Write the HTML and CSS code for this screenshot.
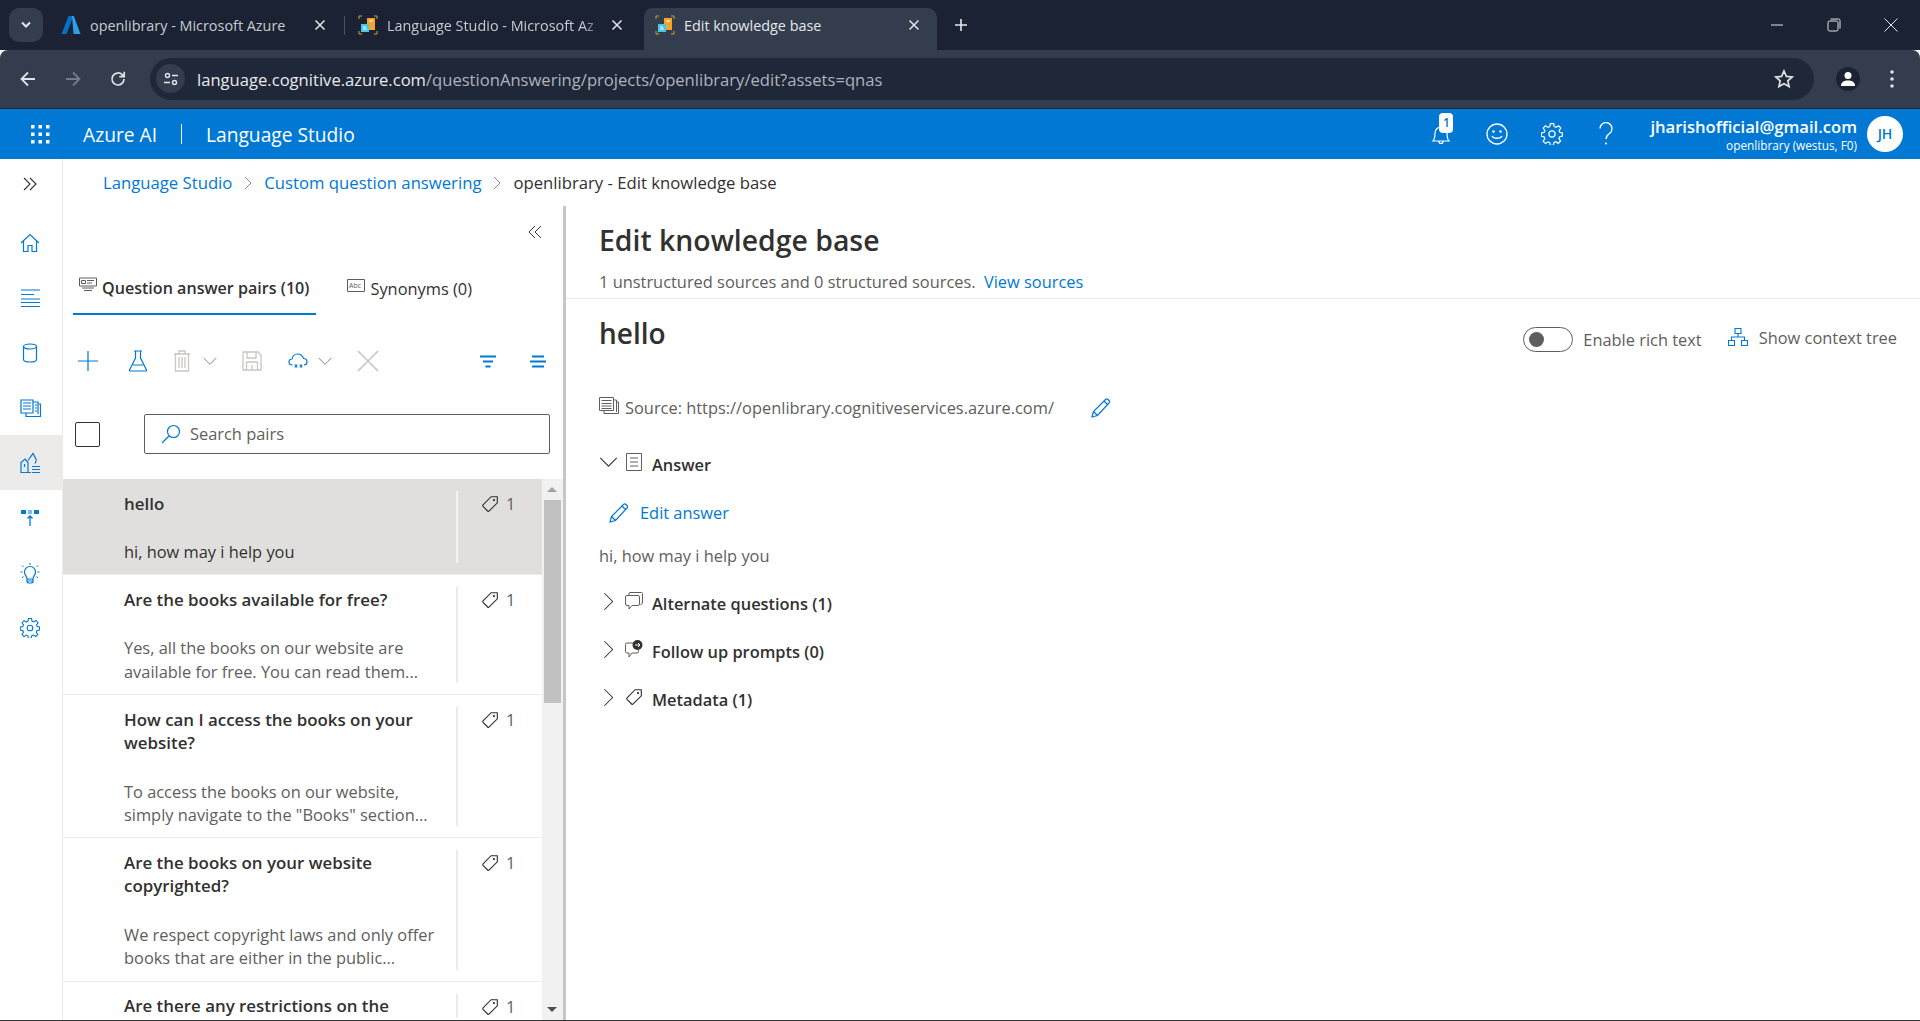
FILE: index.html
```html
<!DOCTYPE html>
<html lang="en">
<head>
    <meta charset="UTF-8">
    <title>Edit knowledge base</title>
    <link rel="stylesheet" href="styles.css">
</head>
<body>
    <svg class="sprites" width="0" height="0">
        <symbol id="i-tag" viewBox="0 0 16 16"><path d="M9 1.5h5.5V7l-7.2 7.2a1 1 0 0 1-1.4 0L1.8 10.1a1 1 0 0 1 0-1.4z" fill="none" stroke="currentColor"/><circle cx="11.5" cy="4.5" r="1" fill="currentColor"/></symbol>
        <symbol id="i-pencil" viewBox="0 0 20 20"><path d="M1 19l1.5-5.5L14.5 1.5a1.8 1.8 0 0 1 2.500 0l1 1a1.800 1.800 0 0 1 0 2.500L6.500 17.500zM2.500 13.500l4 4M13 3l4 4" fill="none" stroke="currentColor" stroke-width="1.2"/></symbol>
        <symbol id="i-chev-right" viewBox="0 0 12 20"><path d="M1.5 1l9 9-9 9" fill="none" stroke="currentColor" stroke-width="1.1"/></symbol>
        <symbol id="i-chev-down" viewBox="0 0 20 12"><path d="M1 1l9 9 9-9" fill="none" stroke="currentColor" stroke-width="1.1"/></symbol>
        <symbol id="i-close" viewBox="0 0 12 12"><path d="M1.5 1.5l9 9M10.5 1.5l-9 9" fill="none" stroke="currentColor" stroke-width="1.5"/></symbol>
        <symbol id="i-ls" viewBox="0 0 20 20"><path d="M1 4V1h3M16 1h3v3M1 16v3h3M16 19h3v-3" fill="none" stroke="#d89a3c" stroke-width="1"/><rect x="9" y="3" width="8" height="12" fill="#f7a32b"/><rect x="3" y="9" width="8" height="8" fill="#49c5e8"/><path d="M11 6h4M5 12h3M5 14h4" stroke="#fff" stroke-width="1"/></symbol>
        <symbol id="i-gear" viewBox="0 0 20 20"><circle cx="10" cy="10" r="2.8" fill="none" stroke="currentColor" stroke-width="1.1"/><path d="M8.5 1h3l.5 2.6 1.7.8 2.3-1.4 2 2.200-1.500 2.200.7 1.700 2.300.4v3l-2.500.5-.7 1.700 1.500 2.200-2.100 2.100-2.200-1.500-1.700.7-.5 2.600h-3L8 18.300l-1.700-.7-2.200 1.500L2 17l1.500-2.200-.7-1.700L.3 12.600v-3l2.500-.5.7-1.700L2 5.200l2.100-2.100 2.200 1.400L8 3.700z" transform="translate(0 -.5)" fill="none" stroke="currentColor" stroke-width="1.1"/></symbol>
    </svg>

    <!-- Browser tabs -->
    <div class="tabstrip">
        <button class="tab-search"><svg width="12" height="8" viewBox="0 0 12 8"><path d="M2 1.500l4 4 4-4" fill="none" stroke="#e3e6ea" stroke-width="2"/></svg></button>
        <div class="tab">
            <svg class="favicon" viewBox="0 0 20 20"><path d="M7.5 1h5L5.5 19H.5z" fill="#0a6fc2"/><path d="M11 1h1.800L19.500 19h-7z" fill="#2f9fe8"/></svg>
            <span class="tab-title">openlibrary - Microsoft Azure</span>
            <svg class="tab-close"><use href="#i-close"/></svg>
        </div>
        <div class="tab tab-sep">
            <svg class="favicon"><use href="#i-ls"/></svg>
            <span class="tab-title tab-fade">Language Studio - Microsoft Az</span>
            <svg class="tab-close"><use href="#i-close"/></svg>
        </div>
        <div class="tab tab-active">
            <svg class="favicon"><use href="#i-ls"/></svg>
            <span class="tab-title">Edit knowledge base</span>
            <svg class="tab-close"><use href="#i-close"/></svg>
        </div>
        <svg class="new-tab" width="14" height="14" viewBox="0 0 14 14"><path d="M7 1v12M1 7h12" stroke="#e3e6ea" stroke-width="1.6"/></svg>
        <div class="win-controls">
            <svg width="14" height="14" viewBox="0 0 14 14"><path d="M1 7h12" stroke="#e3e6ea"/></svg>
            <svg width="14" height="14" viewBox="0 0 14 14"><rect x="1" y="3" width="10" height="10" rx="1.5" fill="none" stroke="#e3e6ea"/><path d="M3.5 1h8a1.500 1.500 0 0 1 1.500 1.500v8" fill="none" stroke="#e3e6ea"/></svg>
            <svg width="14" height="14" viewBox="0 0 14 14"><path d="M.5.5l13 13M13.500.5l-13 13" stroke="#e3e6ea"/></svg>
        </div>
    </div>

    <!-- Browser toolbar -->
    <div class="browser-bar">
        <span class="nav-btn"><svg width="18" height="18" viewBox="0 0 18 18"><path d="M16 9H3M9 2.500L2.500 9 9 15.500" fill="none" stroke="#dfe2e7" stroke-width="1.8"/></svg></span>
        <span class="nav-btn"><svg width="18" height="18" viewBox="0 0 18 18"><path d="M2 9h13M9 2.500L15.500 9 9 15.500" fill="none" stroke="#757c88" stroke-width="1.8"/></svg></span>
        <span class="nav-btn"><svg width="18" height="18" viewBox="0 0 18 18"><path d="M15 9a6 6 0 1 1-1.800-4.300L15 6.500M15.200 1.800v4.900h-4.900" fill="none" stroke="#dfe2e7" stroke-width="1.7"/></svg></span>
        <div class="omnibox">
            <span class="site-chip"><svg width="16" height="16" viewBox="0 0 16 16"><circle cx="4.5" cy="4.5" r="2" fill="none" stroke="#e3e6ea" stroke-width="1.4"/><path d="M9 4.500h6M1 11.500h6" stroke="#e3e6ea" stroke-width="1.4"/><circle cx="11.5" cy="11.5" r="2" fill="none" stroke="#e3e6ea" stroke-width="1.4"/></svg></span>
            <span class="url"><span class="url-host">language.cognitive.azure.com</span>/questionAnswering/projects/openlibrary/edit?assets=qnas</span>
            <svg class="star" width="20" height="20" viewBox="0 0 20 20"><path d="M10 2l2.400 5.400 5.800.6-4.400 3.900 1.300 5.700L10 14.700l-5.100 2.900 1.300-5.700L1.800 8l5.800-.6z" fill="none" stroke="#dfe2e7" stroke-width="1.7"/></svg>
        </div>
        <span class="profile"><svg width="16" height="16" viewBox="0 0 16 16"><circle cx="8" cy="4.5" r="3.5" fill="#fff"/><path d="M1 15c0-4 3-5.500 7-5.500s7 1.500 7 5.500z" fill="#fff"/></svg></span>
        <svg class="kebab" width="16" height="20" viewBox="0 0 16 20"><circle cx="8" cy="3" r="1.8" fill="#dfe2e7"/><circle cx="8" cy="10" r="1.8" fill="#dfe2e7"/><circle cx="8" cy="17" r="1.8" fill="#dfe2e7"/></svg>
    </div>

    <!-- Azure header -->
    <div class="app-header">
        <svg class="waffle" width="19" height="19" viewBox="0 0 19 19" fill="#fff"><rect x="0" y="0" width="3.5" height="3.5"/><rect x="7.5" y="0" width="3.5" height="3.5"/><rect x="15" y="0" width="3.5" height="3.5"/><rect x="0" y="7.5" width="3.5" height="3.5"/><rect x="7.5" y="7.5" width="3.5" height="3.5"/><rect x="15" y="7.5" width="3.5" height="3.5"/><rect x="0" y="15" width="3.5" height="3.5"/><rect x="7.5" y="15" width="3.5" height="3.5"/><rect x="15" y="15" width="3.5" height="3.5"/></svg>
        <span class="brand">Azure AI</span>
        <span class="brand-sep"></span>
        <span class="brand">Language Studio</span>
        <div class="header-right">
            <span class="bell">
                <svg width="20" height="24" viewBox="0 0 20 24"><path d="M2 19c2-2 2-4 2-8a6 6 0 0 1 12 0c0 4 0 6 2 8zM8 19.500a2 2 0 0 0 4 0" fill="none" stroke="#fff" stroke-width="1.2"/></svg>
                <span class="bell-badge">1</span>
            </span>
            <svg class="head-icon" width="22" height="22" viewBox="0 0 22 22"><circle cx="11" cy="11" r="10" fill="none" stroke="#fff" stroke-width="1.3"/><circle cx="7.5" cy="8.5" r="1.2" fill="#fff"/><circle cx="14.5" cy="8.5" r="1.2" fill="#fff"/><path d="M6 13c1.500 3 8.500 3 10 0" fill="none" stroke="#fff" stroke-width="1.3"/></svg>
            <svg class="head-icon head-gear" width="22" height="22"><use href="#i-gear"/></svg>
            <svg class="head-icon" width="16" height="24" viewBox="0 0 16 24"><path d="M2 6.500a6 6 0 1 1 9.500 5c-2 1.400-3.500 2.500-3.500 5.500" fill="none" stroke="#fff" stroke-width="1.3"/><circle cx="8" cy="21.5" r="1" fill="#fff"/></svg>
            <div class="account">
                <div class="account-mail">jharishofficial@gmail.com</div>
                <div class="account-sub">openlibrary (westus, F0)</div>
            </div>
            <span class="avatar">JH</span>
        </div>
    </div>

    <div class="main">
        <!-- Left rail -->
        <div class="rail">
            <div class="rail-item rail-expand"><svg width="16" height="14" viewBox="0 0 16 14"><path d="M2 1l6 6-6 6M8 1l6 6-6 6" fill="none" stroke="#323130" stroke-width="1.1"/></svg></div>
            <div class="rail-item"><svg width="20" height="20" viewBox="0 0 20 20"><path d="M1 10l9-8.500 9 8.500M3.500 8v10.500h4.500v-6h4v6h4.500V8" fill="none" stroke="#0078d4" stroke-width="1.2"/></svg></div>
            <div class="rail-item"><svg width="21" height="20" viewBox="0 0 21 20"><path d="M1 2h19M1 6.500h13M1 11h19M1 14.500h19M1 18.500h19" stroke="#0078d4" stroke-width="1.1"/></svg></div>
            <div class="rail-item"><svg width="16" height="20" viewBox="0 0 16 20"><ellipse cx="8" cy="3.5" rx="6.5" ry="2.5" fill="none" stroke="#0078d4" stroke-width="1.2"/><path d="M1.500 3.500v13c0 1.400 2.900 2.500 6.500 2.500s6.500-1.100 6.500-2.500v-13" fill="none" stroke="#0078d4" stroke-width="1.2"/></svg></div>
            <div class="rail-item"><svg width="21" height="18" viewBox="0 0 21 18"><path d="M1 1h12v13H1zM13 3h5v12M18 5h2.500v12.500H6V14M3 4h8M3 7h8M3 10h8M15 6h2M15 9h2M15 12h2" fill="none" stroke="#0078d4" stroke-width="1.2"/></svg></div>
            <div class="rail-item rail-active"><svg width="21" height="22" viewBox="0 0 21 22"><path d="M1 20.500V10.500L5 7l3 3.500v10zM1 20.500h10M4.500 12v3M8 8.500l5-7 3.500 6.500M16.500 8l-1.500 3.500M12 14.500h8M12 17.500h8M12 20.500h8" fill="none" stroke="#0078d4" stroke-width="1.2"/></svg></div>
            <div class="rail-item"><svg width="18" height="18" viewBox="0 0 18 18"><rect x="0" y="1" width="5" height="4" fill="#0078d4"/><rect x="7" y="1" width="4" height="4" fill="#7fbbe9"/><rect x="13" y="1" width="5" height="4" fill="#0078d4"/><path d="M9 17V7M6.500 9.500L9 7l2.500 2.500" fill="none" stroke="#0078d4" stroke-width="1.3"/></svg></div>
            <div class="rail-item"><svg width="20" height="22" viewBox="0 0 20 22"><path d="M10 1v2M2 3.500l1.500 1.500M18 3.500L16.500 5M.5 10h2M17.500 10h2M2 16l1.500-1.500M18 16l-1.500-1.500" stroke="#0078d4"/><path d="M7 17c0-3-2.500-3.500-2.500-7a5.500 5.500 0 0 1 11 0c0 3.500-2.500 4-2.500 7zM7 17v3l1 1h4l1-1v-3M7 19h6" fill="none" stroke="#0078d4" stroke-width="1.2"/></svg></div>
            <div class="rail-item rail-gear"><svg width="20" height="20"><use href="#i-gear"/></svg></div>
        </div>

        <div class="content">
            <div class="breadcrumb">
                <a class="link">Language Studio</a>
                <svg class="crumb-sep"><use href="#i-chev-right"/></svg>
                <a class="link">Custom question answering</a>
                <svg class="crumb-sep"><use href="#i-chev-right"/></svg>
                <span>openlibrary - Edit knowledge base</span>
            </div>

            <div class="panes">
                <!-- Question list pane -->
                <div class="list-pane">
                    <div class="collapse-row"><svg width="14" height="14" viewBox="0 0 14 14"><path d="M7 1L1 7l6 6M13 1L7 7l6 6" fill="none" stroke="#323130" stroke-width="1"/></svg></div>

                    <div class="pivot">
                        <div class="pivot-item pivot-active">
                            <svg width="18" height="16" viewBox="0 0 18 16"><path d="M.5 1h17v8H.5zM3 11h12M5 13.500h8M2.500 3.500h4v3h-4zM8 3.500h7M8 6h5" fill="none" stroke="#605e5c"/></svg>
                            <span>Question answer pairs (10)</span>
                        </div>
                        <div class="pivot-item pivot-other">
                            <svg width="18" height="13" viewBox="0 0 18 13"><path d="M.5.5h17v12H.5z" fill="none" stroke="#605e5c"/><text x="2" y="9" class="abc-text">Abc</text></svg>
                            <span>Synonyms (0)</span>
                        </div>
                    </div>

                    <div class="commands">
                        <svg class="cmd-add" width="20" height="20" viewBox="0 0 20 20"><path d="M10 0v20M0 10h20" stroke="#0078d4" stroke-width="1.2"/></svg>
                        <svg class="cmd-flask" width="20" height="22" viewBox="0 0 20 22"><path d="M6 1h8M7.500 1v7L1.500 20a.8.8 0 0 0 .7 1h15.600a.8.8 0 0 0 .7-1L12.500 8V1M5 15h10" fill="none" stroke="#0078d4" stroke-width="1.2"/></svg>
                        <svg class="cmd-trash" width="18" height="22" viewBox="0 0 18 22"><path d="M1 4h16M6 4V1h6v3M2.500 4v17h13V4M6 7v11M9 7v11M12 7v11" fill="none" stroke="#c8c6c4" stroke-width="1.3"/></svg>
                        <svg class="cmd-chev" width="14" height="9"><use href="#i-chev-down"/></svg>
                        <svg class="cmd-save" width="20" height="20" viewBox="0 0 20 20"><path d="M1 1h15l3 3v15H1zM5 1v6h9V1M4.500 19v-8h11v8M10 14v5" fill="none" stroke="#c8c6c4" stroke-width="1.3"/></svg>
                        <svg class="cmd-cloud" width="20" height="16" viewBox="0 0 20 16"><path d="M4.500 12C2 12 1 10.500 1 9c0-2 1.500-3 3-3 .5-3 3-5 5.500-5S15 3 15.500 5.500c2 0 3.500 1.500 3.500 3.500 0 1.500-1 3-3 3" fill="none" stroke="#0078d4" stroke-width="1.2"/><path d="M8 11v4M6.500 12l3 2M9.500 12l-3 2M13 11v4M11.500 12l3 2M14.500 12l-3 2" stroke="#0078d4" stroke-width=".9"/></svg>
                        <svg class="cmd-chev cmd-chev2" width="14" height="9"><use href="#i-chev-down"/></svg>
                        <svg class="cmd-close" width="22" height="22" viewBox="0 0 22 22"><path d="M1 1l20 20M21 1L1 21" stroke="#c8c6c4" stroke-width="1.6"/></svg>
                        <svg class="cmd-filter" width="16" height="13" viewBox="0 0 16 13"><path d="M0 1.500h16M3 6.500h10M5.500 11.500h5" stroke="#0078d4" stroke-width="2"/></svg>
                        <svg class="cmd-sort" width="16" height="13" viewBox="0 0 16 13"><path d="M2 1.500h12M0 6.500h16M2 11.500h12" stroke="#0078d4" stroke-width="2"/></svg>
                    </div>

                    <div class="search-row">
                        <span class="checkbox"></span>
                        <div class="search-box">
                            <svg width="20" height="20" viewBox="0 0 20 20"><circle cx="12.5" cy="7.5" r="6" fill="none" stroke="#0078d4" stroke-width="1.2"/><path d="M8 12l-7 7" stroke="#0078d4" stroke-width="1.3"/></svg>
                            <span>Search pairs</span>
                        </div>
                    </div>

                    <div class="list-wrap">
                        <div class="qa-list">
                            <div class="qa-row qa-selected">
                                <div class="qa-text">
                                    <div class="qa-title">hello</div>
                                    <div class="qa-answer">hi, how may i help you</div>
                                </div>
                                <div class="qa-meta"><svg width="18" height="18"><use href="#i-tag"/></svg><span>1</span></div>
                            </div>
                            <div class="qa-row">
                                <div class="qa-text">
                                    <div class="qa-title">Are the books available for free?</div>
                                    <div class="qa-answer">Yes, all the books on our website are<br>available for free. You can read them...</div>
                                </div>
                                <div class="qa-meta"><svg width="18" height="18"><use href="#i-tag"/></svg><span>1</span></div>
                            </div>
                            <div class="qa-row">
                                <div class="qa-text">
                                    <div class="qa-title">How can I access the books on your<br>website?</div>
                                    <div class="qa-answer">To access the books on our website,<br>simply navigate to the "Books" section...</div>
                                </div>
                                <div class="qa-meta"><svg width="18" height="18"><use href="#i-tag"/></svg><span>1</span></div>
                            </div>
                            <div class="qa-row">
                                <div class="qa-text">
                                    <div class="qa-title">Are the books on your website<br>copyrighted?</div>
                                    <div class="qa-answer">We respect copyright laws and only offer<br>books that are either in the public...</div>
                                </div>
                                <div class="qa-meta"><svg width="18" height="18"><use href="#i-tag"/></svg><span>1</span></div>
                            </div>
                            <div class="qa-row">
                                <div class="qa-text">
                                    <div class="qa-title">Are there any restrictions on the</div>
                                </div>
                                <div class="qa-meta"><svg width="18" height="18"><use href="#i-tag"/></svg><span>1</span></div>
                            </div>
                        </div>
                        <div class="scrollbar">
                            <span class="scroll-up"></span>
                            <span class="scroll-thumb"></span>
                            <span class="scroll-down"></span>
                        </div>
                    </div>
                </div>

                <div class="splitter"></div>

                <!-- Detail pane -->
                <div class="detail-pane">
                    <div class="detail-head">
                        <h1>Edit knowledge base</h1>
                        <p class="detail-sub">1 unstructured sources and 0 structured sources. <a class="link view-sources">View sources</a></p>
                    </div>
                    <div class="detail-body">
                        <div class="hello-row">
                            <h2>hello</h2>
                            <div class="hello-tools">
                                <span class="toggle"><span class="toggle-dot"></span></span>
                                <span class="toggle-label">Enable rich text</span>
                                <svg class="tree-icon" width="20" height="18" viewBox="0 0 20 18"><path d="M7 .5h6v5H7zM.5 12.500h6v5h-6zM13.500 12.500h6v5h-6zM10 5.500v3.500M3.500 12.500V9h13v3.500" fill="none" stroke="#0078d4" stroke-width="1.1"/></svg>
                                <span class="tree-label">Show context tree</span>
                            </div>
                        </div>

                        <div class="source-row">
                            <svg width="20" height="17" viewBox="0 0 20 17"><path d="M.5.5h14v13H.5zM14.500 3h3v12M17.500 5h2v11.500H5V13.500M2.500 3.500h10M2.500 6.500h10M2.500 9h10M2.500 11.500h10" fill="none" stroke="#605e5c"/></svg>
                            <span class="source-text">Source: https://openlibrary.cognitiveservices.azure.com/</span>
                            <svg class="source-edit" width="20" height="20"><use href="#i-pencil"/></svg>
                        </div>

                        <div class="section section-answer">
                            <svg class="sec-chev-open" width="19" height="11"><use href="#i-chev-down"/></svg>
                            <svg class="sec-icon sec-doc" width="16" height="18" viewBox="0 0 16 18"><path d="M.5.5h15v17H.5zM4 5h8M4 9h8M4 13h8" fill="none" stroke="#605e5c"/></svg>
                            <span>Answer</span>
                        </div>

                        <div class="edit-answer">
                            <svg width="20" height="20"><use href="#i-pencil"/></svg>
                            <a class="link">Edit answer</a>
                        </div>

                        <p class="answer-text">hi, how may i help you</p>

                        <div class="section">
                            <svg class="sec-chev" width="11" height="19"><use href="#i-chev-right"/></svg>
                            <svg class="sec-icon" width="18" height="18" viewBox="0 0 18 18"><path d="M4 3V1.500A1 1 0 0 1 5 .5h11.500a1 1 0 0 1 1 1V11l-2 2M2 3.500h11a1.500 1.500 0 0 1 1.500 1.500v7a1.500 1.500 0 0 1-1.500 1.500H7L4 17v-3.500H2A1.500 1.500 0 0 1 .5 12V5A1.500 1.500 0 0 1 2 3.500z" fill="none" stroke="#605e5c"/></svg>
                            <span>Alternate questions (1)</span>
                        </div>
                        <div class="section">
                            <svg class="sec-chev" width="11" height="19"><use href="#i-chev-right"/></svg>
                            <svg class="sec-icon" width="18" height="18" viewBox="0 0 18 18"><path d="M8 3H2a1.500 1.500 0 0 0-1.500 1.500v7A1.500 1.500 0 0 0 2 13h2v4l3-4h5a1.500 1.500 0 0 0 1.500-1.500V10" fill="none" stroke="#605e5c"/><circle cx="12.5" cy="5" r="5" fill="#323130"/><path d="M10 5h5M13 3l2 2-2 2" fill="none" stroke="#fff"/></svg>
                            <span>Follow up prompts (0)</span>
                        </div>
                        <div class="section">
                            <svg class="sec-chev" width="11" height="19"><use href="#i-chev-right"/></svg>
                            <svg class="sec-icon" width="18" height="18"><use href="#i-tag"/></svg>
                            <span>Metadata (1)</span>
                        </div>
                    </div>
                </div>
            </div>
        </div>
    </div>
</body>
</html>
```

FILE: styles.css
```css
* {
    box-sizing: border-box;
}

html, body {
    margin: 0;
    height: 1021px;
    overflow: hidden;
}

body {
    font-family: "Open Sans", "Noto Sans", sans-serif;
    font-size: 16.4px;
    color: #323130;
    background-color: #fff;
}

.sprites {
    display: block;
    height: 0;
}

svg {
    display: block;
    flex-shrink: 0;
}

.link {
    color: #0078d4;
}

/* browser chrome */
.tabstrip {
    display: flex;
    height: 50px;
    padding-left: 9px;
    background-color: #1a2233;
}

.tab-search {
    display: flex;
    align-items: center;
    justify-content: center;
    width: 34px;
    height: 34px;
    margin: 8px 4px 0 0;
    padding: 0;
    border: 0;
    border-radius: 10px;
    background-color: #343d4e;
}

.tab {
    display: flex;
    align-items: center;
    width: 297px;
    height: 42px;
    margin-top: 8px;
    padding: 0 16px 8px 14px;
    color: #c7cbd1;
    font-size: 14.4px;
}

.tab-sep {
    background: linear-gradient(#4a5262, #4a5262) no-repeat left 8px / 1px 19px;
}

.tab-active {
    padding: 0 15px 8px 11px;
    border-left: 3px solid transparent;
    border-right: 1px solid transparent;
    border-radius: 10px 10px 0 0;
    background-color: #343d4e;
    background-clip: padding-box;
    color: #e3e6ea;
}

.favicon {
    width: 20px;
    height: 20px;
}

.tab-title {
    flex: 1;
    margin: 0 6px 0 9px;
    white-space: nowrap;
}

.tab-fade {
    -webkit-mask-image: linear-gradient(to right, #000 90%, transparent);
    mask-image: linear-gradient(to right, #000 90%, transparent);
}

.tab-close {
    width: 12px;
    height: 12px;
    margin-right: 2px;
    color: #e3e6ea;
}

.new-tab {
    margin: 18px 0 0 16px;
}

.win-controls {
    display: flex;
    align-items: center;
    gap: 43px;
    height: 50px;
    margin-left: auto;
    padding-right: 22px;
}

.browser-bar {
    display: flex;
    align-items: center;
    height: 59px;
    padding: 0 20px 1px 5px;
    border-bottom: 1px solid #1a2233;
    border-radius: 8px 8px 0 0;
    background-color: #343d4e;
}

.nav-btn {
    display: flex;
    justify-content: center;
    width: 45px;
}

.omnibox {
    display: flex;
    align-items: center;
    flex: 1;
    height: 42px;
    margin-left: 10px;
    padding: 0 20px 0 6px;
    border-radius: 21px;
    background-color: #1f2839;
}

.site-chip {
    display: flex;
    align-items: center;
    justify-content: center;
    width: 29px;
    height: 29px;
    border-radius: 50%;
    background-color: #343d4e;
}

.url {
    margin-left: 12px;
    padding-top: 2px;
    color: #aeb3bb;
    font-size: 16.6px;
    white-space: nowrap;
}

.url-host {
    color: #e8eaed;
}

.star {
    margin-left: auto;
}

.profile {
    display: flex;
    align-items: center;
    justify-content: center;
    width: 24px;
    height: 24px;
    margin-left: 22px;
    border-radius: 50%;
    background-color: #1a2233;
}

.kebab {
    margin-left: 24px;
}

/* azure header */
.app-header {
    display: flex;
    align-items: center;
    height: 50px;
    padding: 0 17px 0 31px;
    background-color: #0078d4;
    color: #fff;
}

.waffle {
    margin-right: 33px;
}

.brand {
    font-size: 19.2px;
}

.brand-sep {
    width: 1px;
    height: 20px;
    margin: 0 24px;
    background-color: #fff;
}

.header-right {
    display: flex;
    align-items: center;
    margin-left: auto;
}

.bell {
    position: relative;
    width: 20px;
    margin-right: 35px;
}

.bell-badge {
    position: absolute;
    top: -9px;
    left: 8px;
    width: 14px;
    height: 20px;
    border-radius: 4px;
    background-color: #fff;
    color: #0078d4;
    font-size: 12px;
    font-weight: 600;
    line-height: 20px;
    text-align: center;
}

.head-icon {
    margin-right: 33px;
}

.head-gear {
    margin-right: 35px;
    color: #fff;
}

.account {
    margin-left: 3px;
    text-align: right;
}

.account-mail {
    font-size: 16.6px;
    font-weight: 600;
    line-height: 21px;
}

.account-sub {
    font-size: 11.8px;
    line-height: 16px;
}

.avatar {
    width: 36px;
    height: 36px;
    margin-left: 10px;
    border-radius: 50%;
    background-color: #fff;
    color: #0078d4;
    font-size: 14px;
    font-weight: 600;
    line-height: 36px;
    text-align: center;
}

/* page */
.main {
    display: flex;
    height: 862px;
    border-bottom: 1px solid #333;
}

.rail {
    width: 63px;
    flex-shrink: 0;
    border-right: 1px solid #edebe9;
    padding-top: 2px;
}

.rail-item {
    display: flex;
    align-items: center;
    justify-content: center;
    height: 55px;
    padding-right: 2px;
}

.rail-expand {
    height: 45px;
    margin-bottom: 9px;
}

.rail-active {
    background-color: #edebe9;
}

.rail-gear {
    color: #0078d4;
}

.content {
    flex: 1;
    display: flex;
    flex-direction: column;
    min-width: 0;
}

.breadcrumb {
    display: flex;
    align-items: center;
    height: 47px;
    padding: 0 0 0 40px;
    font-size: 16.7px;
}

.crumb-sep {
    width: 8px;
    height: 14px;
    margin: 0 12px;
    color: #605e5c;
}

.panes {
    display: flex;
    flex: 1;
    min-height: 0;
}

.list-pane {
    display: flex;
    flex-direction: column;
    width: 500px;
    flex-shrink: 0;
}

.splitter {
    width: 3px;
    flex-shrink: 0;
    background-color: #c8c6c4;
}

.collapse-row {
    display: flex;
    align-items: center;
    justify-content: flex-end;
    height: 52px;
    padding-right: 21px;
}

.pivot {
    display: flex;
    height: 57px;
    padding-left: 10px;
}

.pivot-item {
    display: flex;
    align-items: center;
    gap: 5px;
    height: 57px;
    padding: 5px 6px 0;
    margin-right: 25px;
}

.pivot-active {
    padding-right: 7px;
    border-bottom: 2px solid #0078d4;
    font-size: 16.1px;
    font-weight: 600;
}

.pivot-other {
    padding-top: 3px;
}

.pivot-item svg {
    margin-bottom: 6px;
}

.abc-text {
    font-size: 7px;
    fill: #605e5c;
}

.commands {
    display: flex;
    align-items: center;
    height: 46px;
    margin-top: 23px;
    padding-left: 15px;
}

.cmd-flask { margin-left: 30px; }
.cmd-trash { margin-left: 25px; }
.cmd-chev { margin-left: 12px; color: #605e5c; }
.cmd-save { margin-left: 25px; }
.cmd-cloud { margin-left: 26px; }
.cmd-chev2 { margin-left: 10px; }
.cmd-close { margin-left: 25px; }
.cmd-filter { margin-left: 101px; }
.cmd-sort { margin-left: 34px; }

.search-row {
    display: flex;
    align-items: center;
    height: 40px;
    margin-top: 30px;
    padding-left: 12px;
}

.checkbox {
    width: 25px;
    height: 25px;
    border: 1px solid #323130;
    border-radius: 2px;
}

.search-box {
    display: flex;
    align-items: center;
    width: 406px;
    height: 40px;
    margin-left: 44px;
    padding-left: 16px;
    border: 1px solid #605e5c;
    border-radius: 2px;
    color: #605e5c;
}

.search-box span {
    margin: 0 0 1px 9px;
}

.list-wrap {
    display: flex;
    flex: 1;
    min-height: 0;
    margin-top: 25px;
}

.qa-list {
    flex: 1;
    overflow: hidden;
}

.qa-row {
    display: flex;
    padding: 12px 0 10.1px 61px;
    border-bottom: 1px solid #edebe9;
}

.qa-selected {
    background-color: #e1dfdd;
}

.qa-text {
    width: 332px;
    flex-shrink: 0;
    padding-top: 0.5px;
    padding-bottom: 1px;
    line-height: 23.4px;
    white-space: nowrap;
}

.qa-title {
    font-size: 16.9px;
    font-weight: 600;
}

.qa-answer {
    margin-top: 25px;
    color: #605e5c;
}

.qa-selected .qa-answer {
    color: #323130;
}

.qa-meta {
    display: flex;
    align-items: flex-start;
    flex: 1;
    margin-bottom: 1px;
    padding: 4px 0 0 23px;
    border-left: 2px solid #edebe9;
    color: #605e5c;
    line-height: 18px;
}

.qa-selected .qa-meta {
    border-left-color: #f3f2f1;
}

.qa-meta svg {
    color: #323130;
}

.qa-meta span {
    margin-left: 7px;
}

.scrollbar {
    position: relative;
    width: 21px;
    flex-shrink: 0;
    background-color: #f1f1f1;
}

.scroll-thumb {
    position: absolute;
    top: 21px;
    left: 2px;
    width: 17px;
    height: 203px;
    background-color: #c1c1c1;
}

.scroll-up,
.scroll-down {
    position: absolute;
    left: 5px;
    border-left: 5px solid transparent;
    border-right: 5px solid transparent;
}

.scroll-up {
    top: 8px;
    border-bottom: 5px solid #a3a3a3;
}

.scroll-down {
    bottom: 8px;
    border-top: 5px solid #505050;
}

/* detail */
.detail-pane {
    flex: 1;
    min-width: 0;
}

.detail-head {
    padding: 15px 0 4px 33px;
    border-bottom: 1px solid #edebe9;
}

h1 {
    margin: 0;
    font-size: 28.4px;
    font-weight: 600;
    line-height: 38px;
}

.detail-sub {
    margin: 11px 0 0;
    color: #605e5c;
    line-height: 24px;
}

.view-sources {
    margin-left: 4px;
}

.detail-body {
    padding: 15px 23px 0 33px;
}

.hello-row {
    display: flex;
    justify-content: space-between;
    height: 38px;
}

h2 {
    margin: 0;
    font-size: 28px;
    font-weight: 600;
    line-height: 38px;
}

.hello-tools {
    display: flex;
    align-items: center;
    height: 25px;
    margin-top: 13px;
    color: #605e5c;
}

.toggle {
    display: flex;
    align-items: center;
    width: 50px;
    height: 25px;
    padding-left: 5px;
    border: 1px solid #605e5c;
    border-radius: 13px;
}

.toggle-dot {
    width: 15px;
    height: 15px;
    border-radius: 50%;
    background-color: #605e5c;
}

.toggle-label {
    margin-left: 10px;
}

.tree-icon {
    margin: -6px 0 0 26px;
}

.tree-label {
    margin: -5px 0 0 11px;
}

.source-row {
    display: flex;
    align-items: center;
    height: 24px;
    margin-top: 44px;
    color: #605e5c;
}

.source-text {
    margin: 0 0 2px 6px;
}

.source-edit {
    margin-left: 37px;
    color: #0078d4;
}

.source-row > svg:first-child {
    margin-bottom: 5px;
}

.section {
    display: flex;
    align-items: center;
    height: 24px;
    margin-top: 24px;
    font-weight: 600;
}

.section-answer {
    margin-top: 33px;
}

.sec-chev {
    width: 11px;
    margin: 0 11px 6px 4px;
    color: #323130;
}

.sec-chev-open {
    margin: 0 8px 6px 0;
    color: #323130;
}

.sec-icon {
    margin-bottom: 6px;
    color: #323130;
}

.sec-doc {
    margin-right: 1px;
}

.section span {
    margin: 0 0 2px 9px;
}

.edit-answer {
    display: flex;
    align-items: center;
    height: 24px;
    margin: 24px 0 0 10px;
    color: #0078d4;
}

.edit-answer a {
    margin: 0 0 2px 11px;
}

.answer-text {
    margin: 19px 0 0;
    color: #605e5c;
    line-height: 24px;
}
```
